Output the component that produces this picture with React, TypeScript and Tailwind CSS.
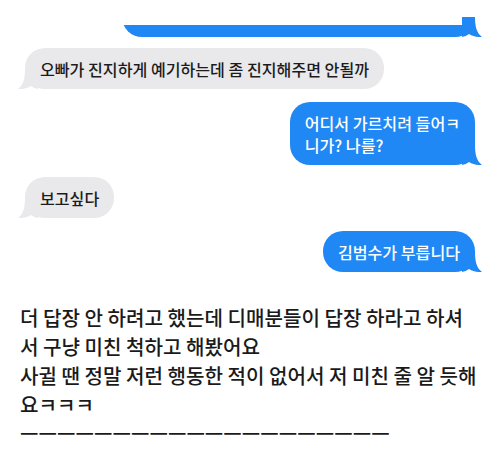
import React from "react";

const FONT = "font-['Noto_Sans_CJK_KR','Noto_Sans',sans-serif]";

function Tail({ side, color }: { side: "left" | "right"; color: string }) {
  const pos = side === "right" ? "right-[-7px]" : "left-[-7px] -scale-x-100";
  return (
    <svg
      className={`absolute bottom-0 ${pos}`}
      width="20"
      height="20"
      viewBox="0 0 20 20"
    >
      <path
        d="M0 0 H13 C13 9 14.5 16 20 20 C15 20.3 10.5 19.2 7 17 C5 18.6 2.5 19.6 0 20 Z"
        fill={color}
      />
    </svg>
  );
}

function Bubble({
  side,
  children,
}: {
  side: "left" | "right";
  children: React.ReactNode;
}) {
  const isRight = side === "right";
  const color = isRight ? "#1f88f4" : "#e9e9eb";
  return (
    <div className={`flex ${isRight ? "justify-end pr-[25px]" : "justify-start pl-[25px]"}`}>
      <div
        className={`relative rounded-[20px] px-[15px] py-[9.5px] text-[16.1px] leading-[22px] font-medium whitespace-nowrap ${
          isRight ? "bg-[#1f88f4] text-white" : "bg-[#e9e9eb] text-[#1c1c1c]"
        }`}
      >
        <span className="relative z-10">{children}</span>
        <Tail side={side} color={color} />
      </div>
    </div>
  );
}

export default function App() {
  return (
    <div className={`w-[500px] h-[453px] bg-white overflow-hidden ${FONT}`}>
      <div className="pt-[25px] flex flex-col">
        {/* cut-off top bubble */}
        <div className="flex justify-end pr-[25px]">
          <div className="relative w-[353px] h-[12px]">
            <div className="h-[12px] overflow-hidden">
              <div className="h-[40px] -mt-[28px] rounded-[20px] bg-[#1f88f4]" />
            </div>
            <Tail side="right" color="#1f88f4" />
          </div>
        </div>
        <div className="h-[11px]" />
        <Bubble side="left">오빠가 진지하게 예기하는데 좀 진지해주면 안될까</Bubble>
        <div className="h-[13px]" />
        <Bubble side="right">
          어디서 가르치려 들어ㅋ
          <br />
          니가? 나를?
        </Bubble>
        <div className="h-[12px]" />
        <Bubble side="left">보고싶다</Bubble>
        <div className="h-[13px]" />
        <Bubble side="right">김범수가 부릅니다</Bubble>
        <div className="mt-[31px] pl-[20px] text-[20.1px] leading-[29px] font-medium text-[#1a1a1a] whitespace-nowrap">
          <div>더 답장 안 하려고 했는데 디매분들이 답장 하라고 하셔</div>
          <div>서 구냥 미친 척하고 해봤어요</div>
          <div>사귈 땐 정말 저런 행동한 적이 없어서 저 미친 줄 알 듯해</div>
          <div>요ㅋㅋㅋ</div>
          <div>ㅡㅡㅡㅡㅡㅡㅡㅡㅡㅡㅡㅡㅡㅡㅡㅡㅡㅡㅡㅡ</div>
        </div>
      </div>
    </div>
  );
}
